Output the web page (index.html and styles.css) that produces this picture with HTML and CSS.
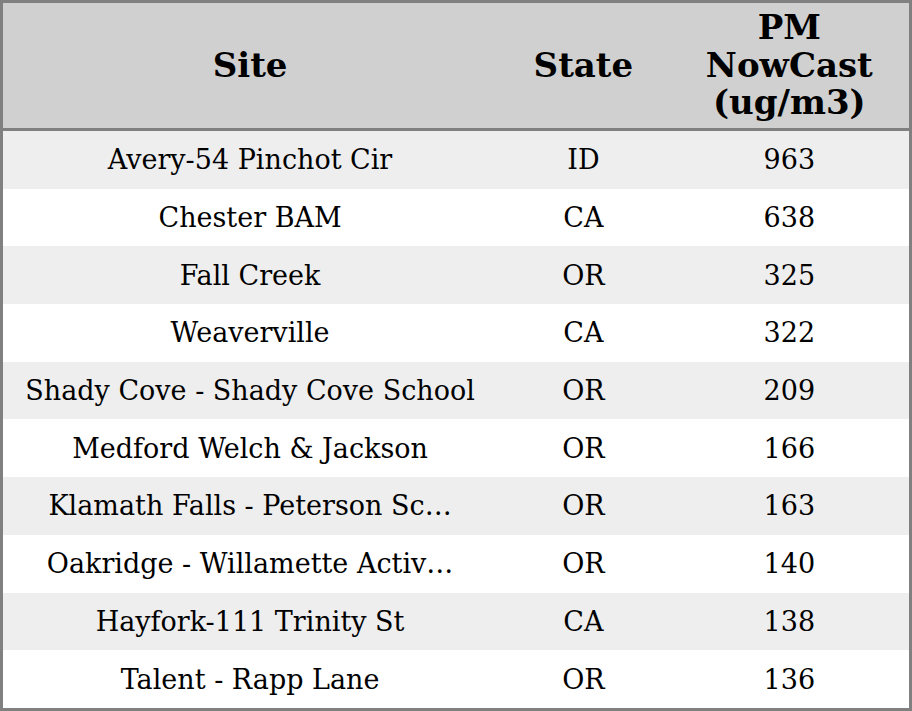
FILE: index.html
```html
<!DOCTYPE html>
<html>
<head>
<meta charset="utf-8">
<link rel="stylesheet" href="styles.css">
</head>
<body>
<table class="aq-table">
  <colgroup>
    <col class="col-site">
    <col class="col-state">
    <col class="col-pm">
  </colgroup>
  <thead>
    <tr>
      <th>Site</th>
      <th>State</th>
      <th>PM<br>NowCast<br>(ug/m3)</th>
    </tr>
  </thead>
  <tbody>
    <tr><td>Avery-54 Pinchot Cir</td><td>ID</td><td>963</td></tr>
    <tr><td>Chester BAM</td><td>CA</td><td>638</td></tr>
    <tr><td>Fall Creek</td><td>OR</td><td>325</td></tr>
    <tr><td>Weaverville</td><td>CA</td><td>322</td></tr>
    <tr><td>Shady Cove - Shady Cove School</td><td>OR</td><td>209</td></tr>
    <tr><td>Medford Welch &amp; Jackson</td><td>OR</td><td>166</td></tr>
    <tr><td>Klamath Falls - Peterson Sc…</td><td>OR</td><td>163</td></tr>
    <tr><td>Oakridge - Willamette Activ…</td><td>OR</td><td>140</td></tr>
    <tr><td>Hayfork-111 Trinity St</td><td>CA</td><td>138</td></tr>
    <tr><td>Talent - Rapp Lane</td><td>OR</td><td>136</td></tr>
  </tbody>
</table>
</body>
</html>
```
FILE: styles.css
```css
html, body {
  margin: 0;
  padding: 0;
  background: #ffffff;
}
.aq-table {
  width: 912px;
  border-collapse: collapse;
  border: 3px solid #808080;
  table-layout: fixed;
  font-family: "DejaVu Serif", serif;
  color: #000;
}
.col-site { width: 494px; }
.col-state { width: 172px; }
.col-pm { width: 240px; }
.aq-table th {
  background: #d0d0d0;
  font-size: 34px;
  font-weight: bold;
  line-height: 37.5px;
  height: 125px;
  padding: 0;
  text-align: center;
  vertical-align: middle;
  border-bottom: 3px solid #808080;
}
.aq-table td {
  font-size: 27px;
  line-height: 31px;
  height: 57.7px;
  padding: 0;
  text-align: center;
  vertical-align: middle;
  white-space: nowrap;
}
.aq-table tbody tr:nth-child(odd) td {
  background: #eeeeee;
}
.aq-table tbody tr:nth-child(even) td {
  background: #ffffff;
}
```
